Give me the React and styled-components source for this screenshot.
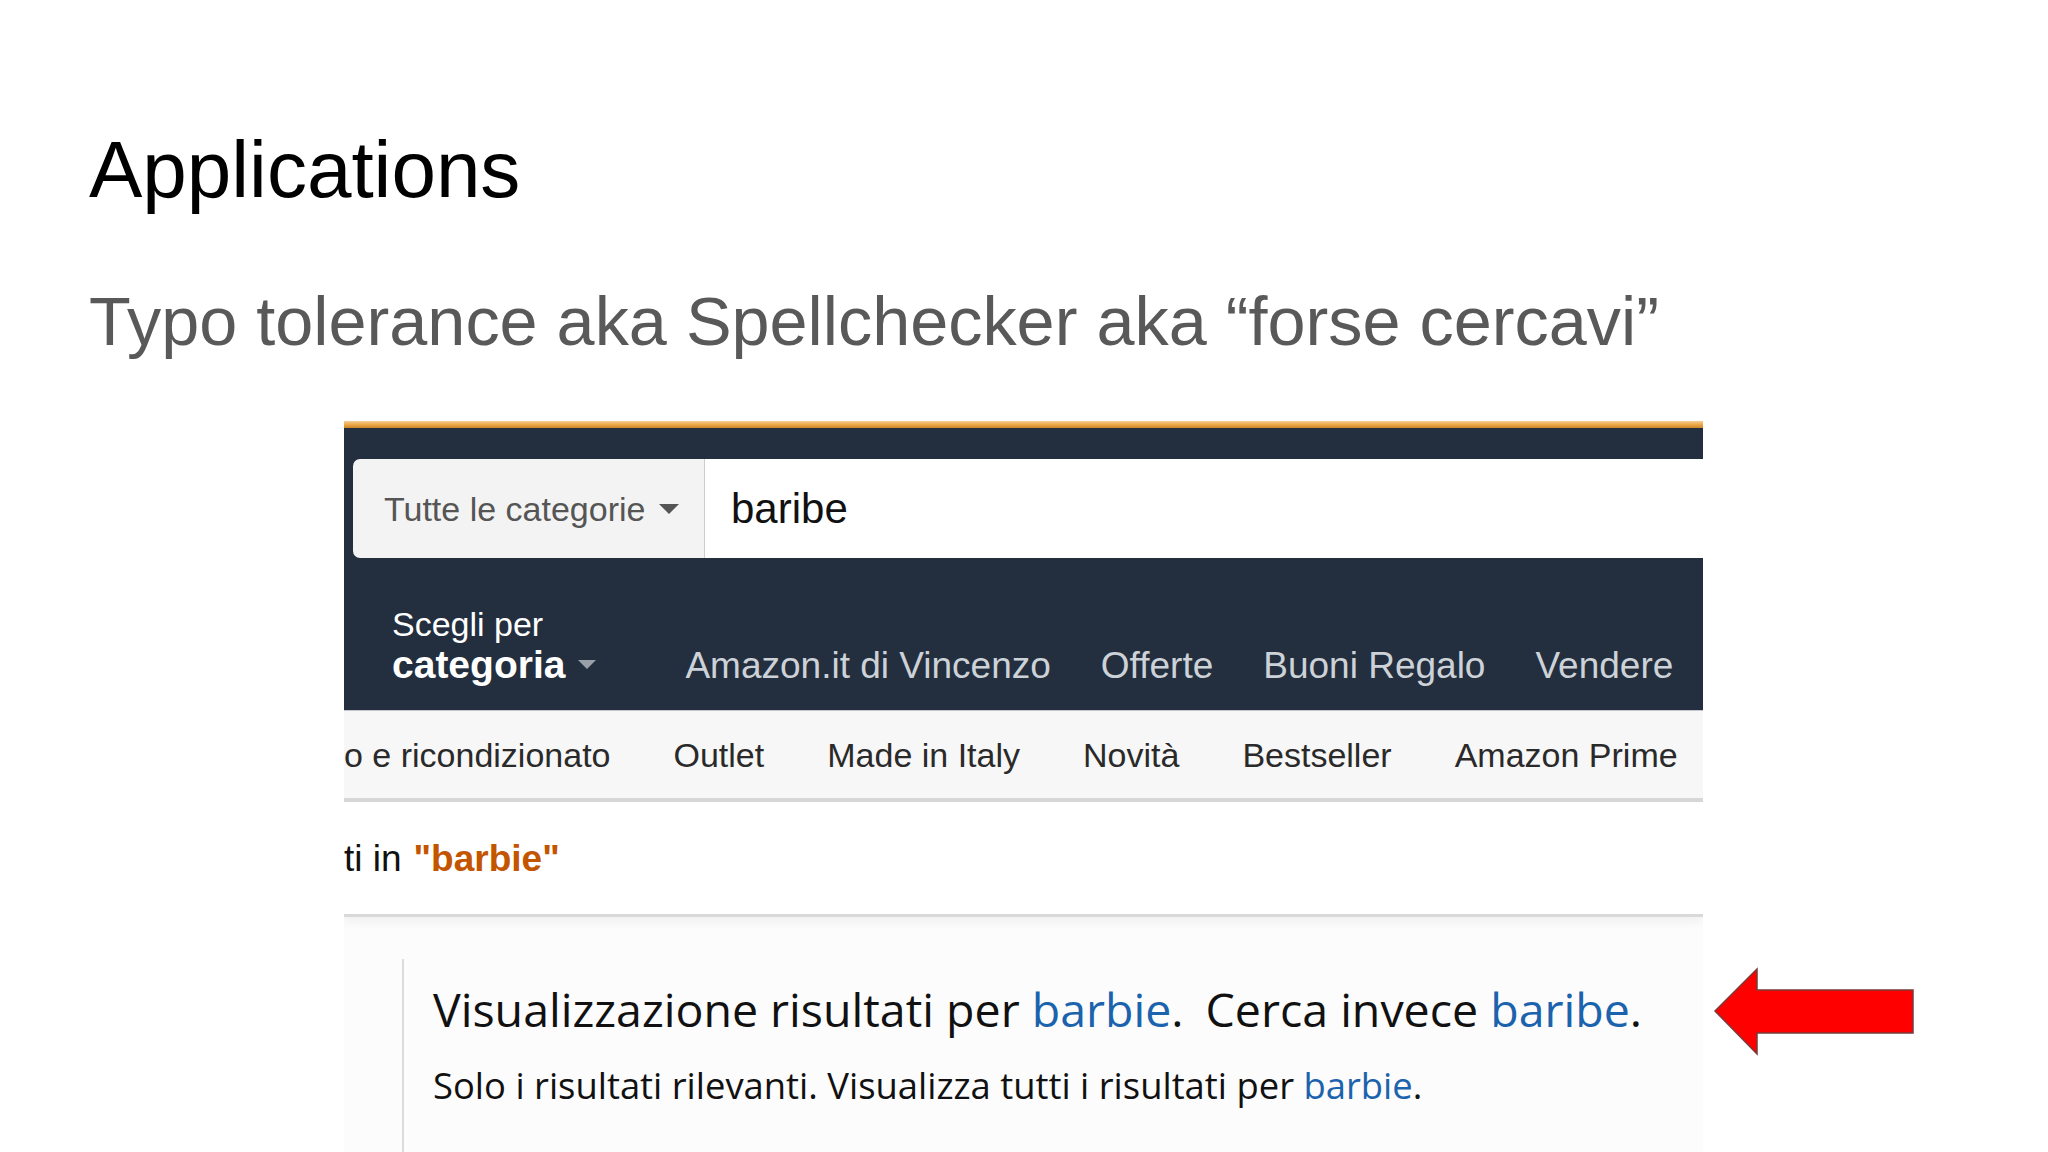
import styled, { createGlobalStyle } from "styled-components";

const GlobalStyle = createGlobalStyle`
    html, body {
        margin: 0;
        padding: 0;
        background: #ffffff;
    }
    body {
        font-family: "Liberation Sans", Arial, sans-serif;
    }
`;

const Slide = styled.div`
    width: 2048px;
    height: 1152px;
    overflow: hidden;
    box-sizing: border-box;
    padding: 130px 0 0 89px;
    background: #ffffff;
`;

const Title = styled.h1`
    margin: 0;
    font-family: "Liberation Sans", Arial, sans-serif;
    font-weight: 400;
    font-size: 80px;
    line-height: 80px;
    color: #000000;
`;

const Subtitle = styled.h2`
    margin: 77px 0 0 0;
    font-family: "Liberation Sans", Arial, sans-serif;
    font-weight: 400;
    font-size: 68.4px;
    line-height: 68px;
    color: #595959;
`;

const ShotRow = styled.div`
    display: flex;
    align-items: flex-start;
    gap: 9px;
    margin: 66px 0 0 255px;
`;

const Shot = styled.div`
    width: 1359px;
    height: 731px;
    flex-shrink: 0;
    overflow: hidden;
    display: flex;
    flex-direction: column;
    background: #fcfcfc;
`;

const OrangeBar = styled.div`
    height: 7px;
    background: linear-gradient(#f5cf94, #e8a13c 60%, #c8862e);
`;

const DarkStrip = styled.div`
    height: 31px;
    background: #232f3e;
`;

const SearchRow = styled.div`
    height: 99px;
    display: flex;
    padding-left: 9px;
    background: #232f3e;
`;

const CategoryBox = styled.div`
    width: 352px;
    box-sizing: border-box;
    display: flex;
    align-items: center;
    padding-left: 31px;
    background: #f3f3f3;
    border-radius: 7px 0 0 7px;
    border-right: 1px solid #cdcdcd;
    font-size: 34px;
    line-height: 34px;
    color: #555555;
`;

const Caret = styled.span`
    display: inline-block;
    width: 0;
    height: 0;
    margin-left: ${(p) => p.$gap || 14}px;
    border-left: ${(p) => p.$size || 10}px solid transparent;
    border-right: ${(p) => p.$size || 10}px solid transparent;
    border-top: ${(p) => p.$size || 10}px solid ${(p) => p.$color || "#555555"};
`;

const SearchInput = styled.div`
    flex: 1;
    display: flex;
    align-items: center;
    padding-left: 26px;
    background: #ffffff;
    font-size: 42px;
    line-height: 42px;
    color: #111111;
`;

const NavRow = styled.div`
    height: 152px;
    box-sizing: border-box;
    display: flex;
    align-items: flex-end;
    padding: 0 0 26px 48px;
    background: #232f3e;
`;

const ShopBy = styled.div`
    display: flex;
    flex-direction: column;
    color: #ffffff;
`;

const ShopSmall = styled.span`
    font-size: 34px;
    line-height: 36px;
    margin-bottom: 3px;
`;

const ShopBig = styled.span`
    display: flex;
    align-items: center;
    font-size: 39px;
    line-height: 39px;
    font-weight: 700;
`;

const NavLinks = styled.div`
    display: flex;
    gap: 50px;
    margin-left: 89px;
    font-size: 37px;
    line-height: 37px;
    color: #cdd2d8;
    white-space: nowrap;
`;

const SubNav = styled.div`
    height: 92px;
    flex-shrink: 0;
    display: flex;
    align-items: center;
    gap: 63px;
    background: #f7f7f7;
    border-top: 1px solid #c4c8cd;
    border-bottom: 4px solid #d7d7d7;
    font-size: 34px;
    line-height: 34px;
    color: #2a2a2a;
    white-space: nowrap;
    box-sizing: border-box;
`;

const ResultRow = styled.div`
    height: 115px;
    flex-shrink: 0;
    box-sizing: border-box;
    display: flex;
    align-items: center;
    background: #ffffff;
    border-bottom: 3px solid #d9d9d9;
    box-shadow: 0 5px 10px rgba(0, 0, 0, 0.05);
    font-size: 37px;
    line-height: 37px;
    color: #111111;
    white-space: nowrap;
`;

const Keyword = styled.span`
    margin-left: 12px;
    font-weight: 700;
    color: #c45500;
`;

const Results = styled.div`
    flex: 1;
    padding: 42px 0 0 58px;
`;

const Panel = styled.div`
    height: 100%;
    border-left: 2px solid #dcdcdc;
    padding: 23px 0 0 29px;
    font-family: "Open Sans", "Noto Sans", sans-serif;
    color: #111111;
    white-space: nowrap;
`;

const Headline = styled.div`
    font-size: 46.5px;
    line-height: 55px;
`;

const Subline = styled.div`
    margin-top: 27px;
    font-size: 36.4px;
    line-height: 43px;
`;

const Link = styled.span`
    color: #1c63ad;
`;

const Spacer = styled.span`
    display: inline-block;
    width: 22px;
`;

const Arrow = styled.svg`
    flex-shrink: 0;
    margin-top: 546px;
`;

const navLinks = ["Amazon.it di Vincenzo", "Offerte", "Buoni Regalo", "Vendere"];
const subLinks = ["o e ricondizionato", "Outlet", "Made in Italy", "Novità", "Bestseller", "Amazon Prime"];

function App() {
    return (
        <>
            <GlobalStyle />
            <Slide>
                <Title>Applications</Title>
                <Subtitle>Typo tolerance aka Spellchecker aka “forse cercavi”</Subtitle>
                <ShotRow>
                    <Shot>
                        <OrangeBar />
                        <DarkStrip />
                        <SearchRow>
                            <CategoryBox>
                                Tutte le categorie
                                <Caret />
                            </CategoryBox>
                            <SearchInput>baribe</SearchInput>
                        </SearchRow>
                        <NavRow>
                            <ShopBy>
                                <ShopSmall>Scegli per</ShopSmall>
                                <ShopBig>
                                    categoria
                                    <Caret $size={9} $gap={13} $color="#9aa0a8" />
                                </ShopBig>
                            </ShopBy>
                            <NavLinks>
                                {navLinks.map((l) => (
                                    <span key={l}>{l}</span>
                                ))}
                            </NavLinks>
                        </NavRow>
                        <SubNav>
                            {subLinks.map((l) => (
                                <span key={l}>{l}</span>
                            ))}
                        </SubNav>
                        <ResultRow>
                            ti in<Keyword>"barbie"</Keyword>
                        </ResultRow>
                        <Results>
                            <Panel>
                                <Headline>
                                    Visualizzazione risultati per <Link>barbie</Link>.<Spacer />Cerca invece{" "}
                                    <Link>baribe</Link>.
                                </Headline>
                                <Subline>
                                    Solo i risultati rilevanti. Visualizza tutti i risultati per <Link>barbie</Link>.
                                </Subline>
                            </Panel>
                        </Results>
                    </Shot>
                    <Arrow width="204" height="90" viewBox="0 0 204 90">
                        <polygon
                            points="3,44 45,2 45,23 201,23 201,66 45,66 45,87"
                            fill="#ff0000"
                            stroke="#7a3a3a"
                            strokeWidth="1.5"
                            strokeLinejoin="miter"
                        />
                    </Arrow>
                </ShotRow>
            </Slide>
        </>
    );
}

export default App;
